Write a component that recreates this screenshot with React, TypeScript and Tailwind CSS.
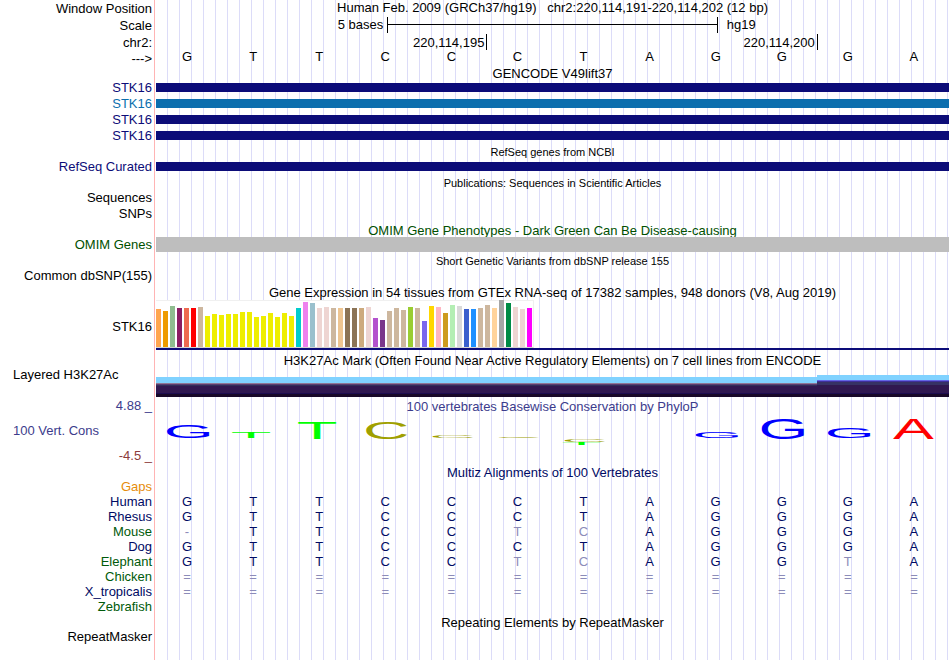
import type { ReactNode } from "react";

const NAVY = "text-[#0c0c78]";
const GREEN = "text-[#005a0a]";
const ALIGN = "text-[#000a64]";

const SEQUENCE = "GTTCCCTAGGGA".split("");

type Tissue = [height: number, color: string];

const TISSUES: Tissue[] = [
  [38, "#ffa54f"], [36, "#ee9a00"], [41, "#8fbc8f"], [39, "#8b1c62"], [39, "#ee6a50"], [39, "#ff0000"],
  [40, "#cdb79e"], [31, "#eeee00"], [33, "#eeee00"], [32, "#eeee00"], [33, "#eeee00"], [33, "#eeee00"],
  [35, "#eeee00"], [35, "#eeee00"], [30, "#eeee00"], [31, "#eeee00"], [34, "#eeee00"], [30, "#eeee00"],
  [34, "#eeee00"], [31, "#eeee00"], [39, "#00cdcd"], [45, "#ee82ee"], [44, "#9ac0cd"], [39, "#eed5d2"],
  [40, "#eed5d2"], [39, "#cdb79e"], [39, "#eec591"], [39, "#8b7355"], [39, "#8b7355"], [39, "#cdaa7d"],
  [40, "#eed5d2"], [29, "#b452cd"], [27, "#7a378b"], [36, "#cdb79e"], [39, "#cdb79e"], [37, "#cdb79e"],
  [40, "#9acd32"], [39, "#cdb79e"], [26, "#7a67ee"], [41, "#ffd700"], [40, "#ffb6c1"], [34, "#cd9b1d"],
  [42, "#b4eeb4"], [41, "#d9d9d9"], [38, "#3a5fcd"], [38, "#1e90ff"], [39, "#cdb79e"], [42, "#cdb79e"],
  [39, "#ffd39b"], [47, "#a6a6a6"], [44, "#008b45"], [40, "#eed5d2"], [38, "#eed5d2"], [39, "#ff00ff"],
];

/* Extent of each base letter at font size 100, its colour and its width in the logo. */
const LOGO_LETTERS: Record<string, { box: string; color: string; x: number; width: number }> = {
  G: { box: "5 -70 67 71", color: "#0000ff", x: 11, width: 43 },
  T: { box: "2 -69 57 69", color: "#00ff00", x: 10, width: 38 },
  C: { box: "5 -70 64 71", color: "#a0a000", x: 12, width: 41 },
  A: { box: "0 -69 67 69", color: "#ff0000", x: 10, width: 41 },
};

const LOGO: { base: string; column: number; y: number; height: number }[] = [
  { base: "G", column: 0, y: 7, height: 13 },
  { base: "T", column: 1, y: 14, height: 6 },
  { base: "T", column: 2, y: 4, height: 17 },
  { base: "C", column: 3, y: 4, height: 17 },
  { base: "C", column: 4, y: 17, height: 3 },
  { base: "C", column: 5, y: 19, height: 1 },
  { base: "C", column: 6, y: 21, height: 3 },
  { base: "T", column: 6, y: 24, height: 3 },
  { base: "G", column: 8, y: 14, height: 6 },
  { base: "G", column: 9, y: 0, height: 21 },
  { base: "G", column: 10, y: 10, height: 10 },
  { base: "A", column: 11, y: 0, height: 21 },
];

/* Lower-case letters differ from the human base and are drawn pale. */
const SPECIES: { name: string; color: string; bases: string }[] = [
  { name: "Gaps", color: "text-[#e68c0a]", bases: "            " },
  { name: "Human", color: ALIGN, bases: "GTTCCCTAGGGA" },
  { name: "Rhesus", color: ALIGN, bases: "GTTCCCTAGGGA" },
  { name: "Mouse", color: GREEN, bases: "-TTCCtcAGGGA" },
  { name: "Dog", color: ALIGN, bases: "GTTCCCTAGGGA" },
  { name: "Elephant", color: GREEN, bases: "GTTCCtcAGGtA" },
  { name: "Chicken", color: GREEN, bases: "============" },
  { name: "X_tropicalis", color: ALIGN, bases: "============" },
  { name: "Zebrafish", color: GREEN, bases: "            " },
];

function Row({ label, className = "", labelClass = "", children }: {
  label?: ReactNode;
  className?: string;
  labelClass?: string;
  children?: ReactNode;
}) {
  return (
    <div className={`flex ${className}`}>
      <div className={`w-[156px] shrink-0 pr-1 text-right ${labelClass}`}>{label}</div>
      <div className="min-w-0 flex-1">{children}</div>
    </div>
  );
}

function Title({ children, className = "h-[15px]" }: { children: ReactNode; className?: string }) {
  return (
    <Row className={className}>
      <h2 className="text-center">{children}</h2>
    </Row>
  );
}

function GeneRow({ label, labelClass = NAVY, bar = "bg-[#0c0c78]" }: { label: string; labelClass?: string; bar?: string }) {
  return (
    <Row label={label} labelClass={labelClass} className="h-4">
      <div className={`mt-[3px] h-[9px] ${bar}`} />
    </Row>
  );
}

function SequenceLogo() {
  return (
    <svg className="mt-1 block h-7 w-full overflow-visible" viewBox="0 0 792 28" preserveAspectRatio="none" role="img" aria-label="PhyloP conservation logo">
      {LOGO.map(({ base, column, y, height }) => {
        const letter = LOGO_LETTERS[base];
        return (
          <svg
            key={`${column}-${base}`}
            className="overflow-visible"
            x={column * 66 + letter.x}
            y={y}
            width={letter.width}
            height={height}
            viewBox={letter.box}
            preserveAspectRatio="none"
          >
            <text x="0" y="0" fontSize="100" fill={letter.color}>{base}</text>
          </svg>
        );
      })}
    </svg>
  );
}

export default function App() {
  return (
    <main className="min-h-screen bg-white bg-[linear-gradient(to_right,white_154px,#ffb4b4_154px,#ffb4b4_155px,white_155px,white_156px,transparent_156px),repeating-linear-gradient(to_right,transparent_0px,transparent_11px,#dcdcf8_11px,#dcdcf8_12px)] pr-px font-['Liberation_Sans',Arial,sans-serif] text-[13px] leading-[15px] whitespace-nowrap text-black">
      <Row label="Window Position" labelClass="pt-px" className="h-[17px]">
        <h1 className="text-center whitespace-pre">Human Feb. 2009 (GRCh37/hg19)   chr2:220,114,191-220,114,202 (12 bp)</h1>
      </Row>
      <Row label="Scale" labelClass="pt-px" className="h-[17px]">
        <div className="grid grid-cols-[7fr_10fr_7fr]">
          <span className="pr-1 text-right">5 bases</span>
          <div className="h-4 border-x border-black pt-[7px]">
            <div className="h-px bg-black" />
          </div>
          <span className="pl-[9px]">hg19</span>
        </div>
      </Row>
      <Row label="chr2:" labelClass="pt-px" className="h-[15px]">
        <div className="grid h-[15px] grid-cols-[5fr_5fr_2fr] pt-px">
          <span className="pr-0.5 text-right">220,114,195</span>
          <span className="-mt-px border-l border-black pt-px pr-0.5 text-right">220,114,200</span>
          <span className="-mt-px border-l border-black" />
        </div>
      </Row>
      <Row label="--->" labelClass="pt-0.5" className="h-[17px]">
        <div className="grid grid-cols-12">
          {SEQUENCE.map((base, i) => (
            <span key={i} className="pr-1 text-center">{base}</span>
          ))}
        </div>
      </Row>

      <Title className="h-[14px]">GENCODE V49lift37</Title>
      <GeneRow label="STK16" />
      <GeneRow label="STK16" labelClass="text-[#0b6fae]" bar="bg-[#0c6eae]" />
      <GeneRow label="STK16" />
      <GeneRow label="STK16" />

      <Title className="h-[15px] pt-px text-[11px]">RefSeq genes from NCBI</Title>
      <GeneRow label="RefSeq Curated" />

      <Title className="h-[15px] pt-px text-[11px]">Publications: Sequences in Scientific Articles</Title>
      <Row label="Sequences" className="h-4" />
      <Row label="SNPs" className="h-4" />

      <Title className="h-[15px] pt-px text-[#005000]">OMIM Gene Phenotypes - Dark Green Can Be Disease-causing</Title>
      <Row label="OMIM Genes" labelClass="text-[#005000]">
        <div className="h-[15px] bg-[#bebebe]" />
      </Row>

      <Title className="h-4 pt-0.5 text-[11px]">Short Genetic Variants from dbSNP release 155</Title>
      <Row label="Common dbSNP(155)" className="h-[17px]" />

      <Title>Gene Expression in 54 tissues from GTEx RNA-seq of 17382 samples, 948 donors (V8, Aug 2019)</Title>
      <Row label="STK16" labelClass="pt-[19px]">
        <div className="flex h-12 w-[378px] items-end gap-0.5 border-t border-r border-b border-t-[#f0f0f0] border-r-[#f0f0f0] border-b-[#d2d2d2] bg-white">
          {TISSUES.map(([height, color], i) => (
            <div key={i} className="w-[5px] shrink-0" style={{ height, backgroundColor: color }} />
          ))}
        </div>
        <div className="h-0.5 bg-[#0c0c78]" />
      </Row>

      <div className="flex">
        <div className="w-[156px] shrink-0 pt-[17px] pl-[13px]">Layered H3K27Ac</div>
        <div className="min-w-0 flex-1 pt-[3px]">
          <h2 className="text-center">H3K27Ac Mark (Often Found Near Active Regulatory Elements) on 7 cell lines from ENCODE</h2>
          <div className="mt-[7px] grid grid-cols-[10fr_2fr] items-end">
            <div>
              <div className="h-[6px] bg-[#80d2ff]" />
              <div className="h-px bg-[#8c7896]" />
              <div className="h-px bg-[#5a3c6e]" />
              <div className="h-px bg-[#30305a]" />
              <div className="h-[7px] bg-[#301850]" />
              <div className="h-px bg-[#1c0c50]" />
              <div className="h-[3px] bg-[#180828]" />
            </div>
            <div>
              <div className="h-[5px] bg-[#80d2ff]" />
              <div className="h-px bg-[#6464e6]" />
              <div className="h-px bg-[#40309a]" />
              <div className="h-[3px] bg-[#363264]" />
              <div className="h-[8px] bg-[#301850]" />
              <div className="h-px bg-[#1c0c50]" />
              <div className="h-[3px] bg-[#180828]" />
            </div>
          </div>
        </div>
      </div>

      <div className="flex h-[68px] text-[#3c3c8c]">
        <div className="flex w-[156px] shrink-0 flex-col pt-px pr-1">
          <span className="text-right">4.88 _</span>
          <span className="pt-[10px] pb-[10px] pl-[13px]">100 Vert. Cons</span>
          <span className="text-right text-[#8c3c3c]">-4.5 _</span>
        </div>
        <div className="min-w-0 flex-1 pt-0.5">
          <h2 className="text-center">100 vertebrates Basewise Conservation by PhyloP</h2>
          <SequenceLogo />
        </div>
      </div>

      <Title className={`h-[14px] ${ALIGN}`}>Multiz Alignments of 100 Vertebrates</Title>
      <table className="w-full table-fixed border-collapse">
        <colgroup>
          <col className="w-[156px]" />
          {SEQUENCE.map((_, i) => (
            <col key={i} />
          ))}
        </colgroup>
        <tbody>
          {SPECIES.map(({ name, color, bases }) => (
            <tr key={name} className="h-[15px]">
              <th scope="row" className={`p-0 pr-1 text-right font-normal ${color}`}>{name}</th>
              {bases.split("").map((base, i) => (
                <td key={i} className={`p-0 pr-1 text-center ${/[A-Z]/.test(base) ? ALIGN : "text-[#8c8cb9]"}`}>
                  {base.toUpperCase()}
                </td>
              ))}
            </tr>
          ))}
        </tbody>
      </table>

      <Title className="h-[15px] pt-px">Repeating Elements by RepeatMasker</Title>
      <Row label="RepeatMasker" />
    </main>
  );
}
